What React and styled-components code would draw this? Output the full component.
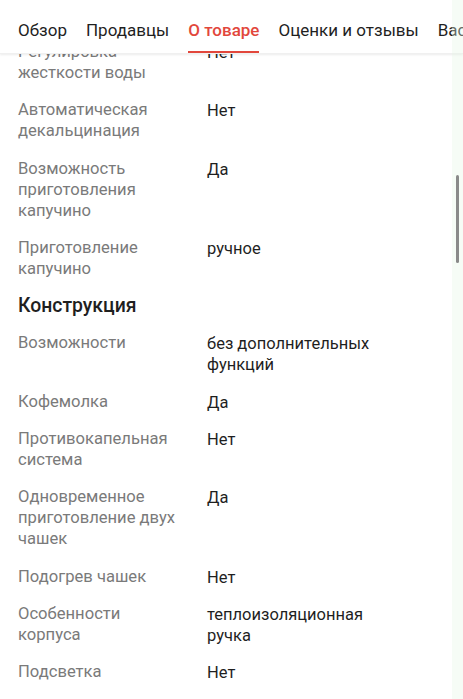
import React from "react";
import styled, { createGlobalStyle } from "styled-components";

const Global = createGlobalStyle`
  html, body { margin: 0; padding: 0; background: #fff; }
  body { font-family: Roboto, "Noto Sans", "Liberation Sans", sans-serif; overflow: hidden; }
  * { box-sizing: border-box; }
`;

const Page = styled.div`
  width: 463px;
  height: 699px;
  overflow: hidden;
  position: relative;
  background: #fff;
`;

const TabBar = styled.nav`
  position: absolute;
  top: 0;
  left: 0;
  right: 0;
  height: 54px;
  background: #fff;
  display: flex;
  align-items: flex-end;
  gap: 19px;
  padding: 0 0 0 18px;
  white-space: nowrap;
  overflow: hidden;
  box-shadow: 0 1px 2px rgba(0, 0, 0, 0.08);
  border-bottom: 1px solid #f0f0f0;
  z-index: 2;
`;

const Tab = styled.div`
  flex: none;
  font-size: 17px;
  line-height: 20px;
  padding: 0 0 11px;
  color: ${(p) => (p.$active ? "#e2473c" : "#1f1f1f")};
  font-weight: ${(p) => (p.$active ? 500 : 400)};
  border-bottom: 2px solid ${(p) => (p.$active ? "#e2473c" : "transparent")};
`;

const Content = styled.div`
  padding: 41px 18px 0 18px;
`;

const Specs = styled.div`
  display: grid;
  grid-template-columns: 166px 170px;
  column-gap: 23px;
  row-gap: 16.3px;
`;

const Heading = styled.h3`
  grid-column: 1 / -1;
  margin: 0;
  font-size: 19.4px;
  line-height: 21px;
  font-weight: 500;
  color: #1f1f1f;
`;

const Label = styled.div`
  font-size: 16.6px;
  line-height: 21px;
  color: #7a7a7a;
`;

const Value = styled.div`
  font-size: 16.5px;
  line-height: 21px;
  padding-top: 1px;
  margin-bottom: -1px;
  color: #1f1f1f;
`;

const Scrollbar = styled.div`
  position: absolute;
  left: 456px;
  top: 175px;
  width: 3px;
  height: 88px;
  border-radius: 2px;
  background: #8a8a8a;
  z-index: 3;
`;

const EdgeStrip = styled.div`
  position: absolute;
  top: 0;
  right: 0;
  width: 11px;
  height: 100%;
  background: rgba(230, 245, 228, 0.35);
  z-index: 3;
`;

const tabs = ["Обзор", "Продавцы", "О товаре", "Оценки и отзывы", "Вас"];

const rows = [
  ["Регулировка жесткости воды", "Нет"],
  ["Автоматическая декальцинация", "Нет"],
  ["Возможность приготовления капучино", "Да"],
  ["Приготовление капучино", "ручное"],
  { heading: "Конструкция" },
  ["Возможности", "без дополнительных функций"],
  ["Кофемолка", "Да"],
  ["Противокапельная система", "Нет"],
  ["Одновременное приготовление двух чашек", "Да"],
  ["Подогрев чашек", "Нет"],
  ["Особенности корпуса", "теплоизоляционная ручка"],
  ["Подсветка", "Нет"],
];

export default function App() {
  return (
    <Page>
      <Global />
      <TabBar>
        {tabs.map((t) => (
          <Tab key={t} $active={t === "О товаре"}>
            {t}
          </Tab>
        ))}
      </TabBar>
      <Content>
        <Specs>
          {rows.map((r, i) =>
            r.heading ? (
              <Heading key={i}>{r.heading}</Heading>
            ) : (
              <React.Fragment key={i}>
                <Label>{r[0]}</Label>
                <Value>{r[1]}</Value>
              </React.Fragment>
            )
          )}
        </Specs>
      </Content>
      <EdgeStrip />
      <Scrollbar />
    </Page>
  );
}
